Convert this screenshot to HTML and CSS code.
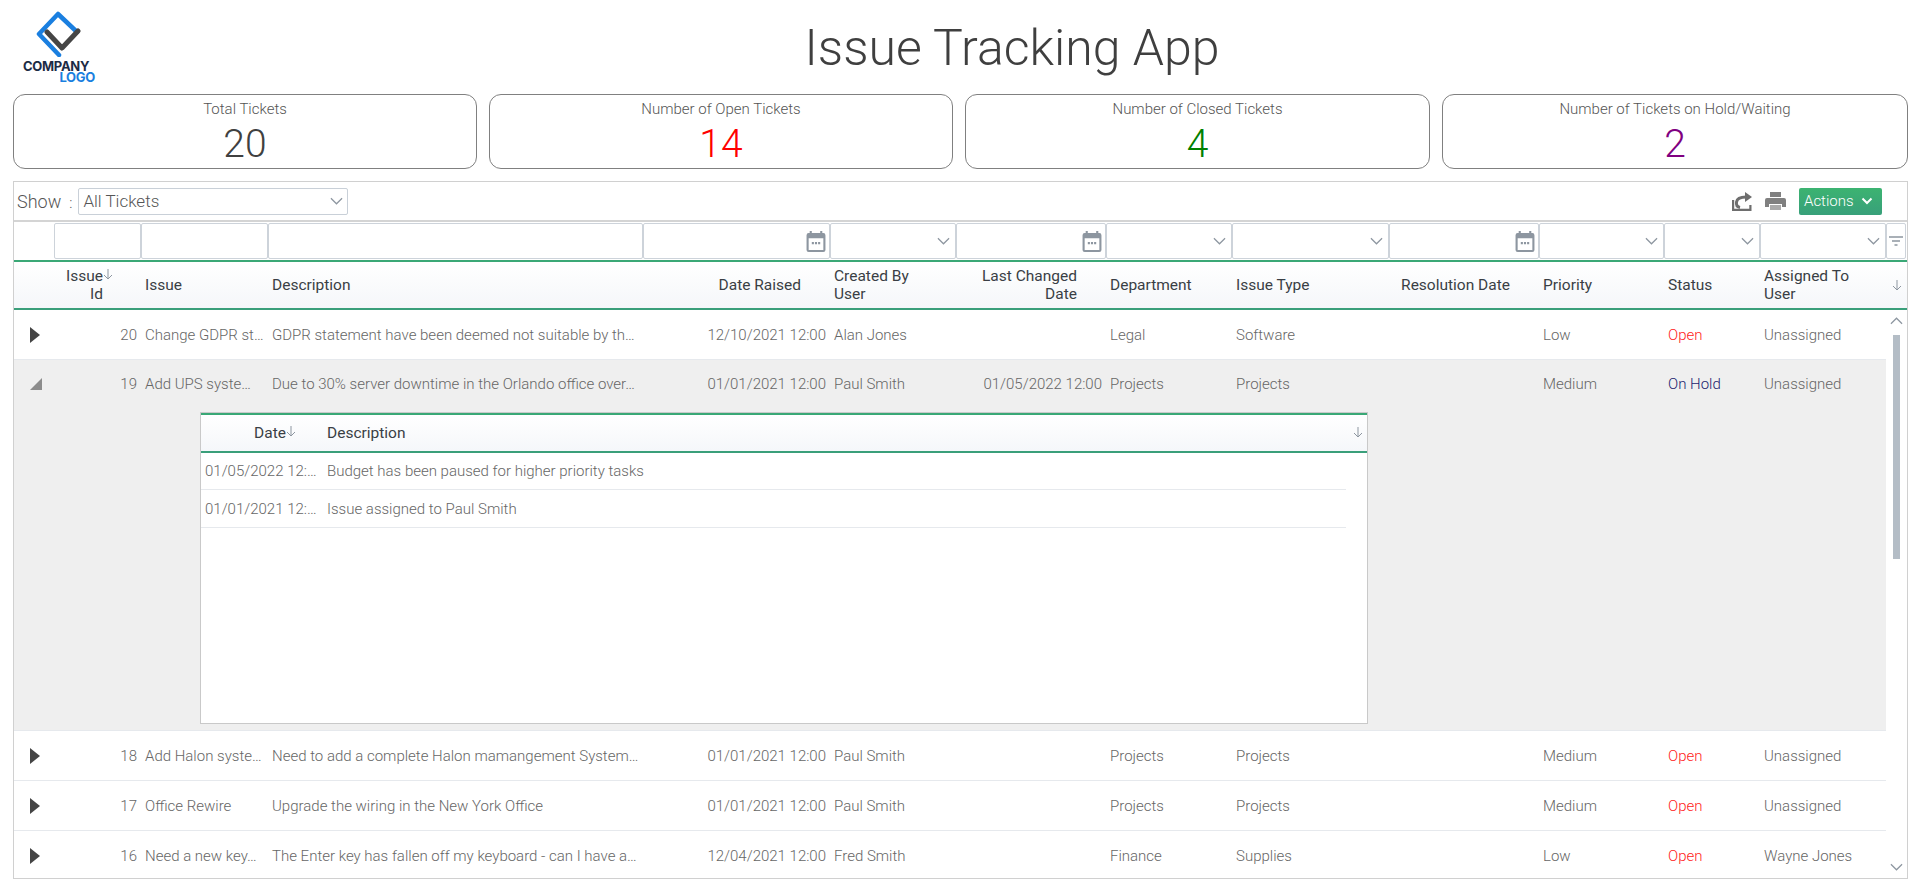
FILE: index.html
```html
<!DOCTYPE html>
<html lang="en">
<head>
    <meta charset="UTF-8">
    <title>Issue Tracking App</title>
    <link rel="stylesheet" href="styles.css">
</head>
<body>
    <svg class="defs" width="0" height="0">
        <symbol id="i-chevron" viewBox="0 0 14 8"><path d="M1 1l6 6 6-6" fill="none" stroke="currentColor" stroke-width="1.3"/></symbol>
        <symbol id="i-calendar" viewBox="0 0 18 20"><path fill="currentColor" d="M3 0h2v2h8V0h2v2h1a2 2 0 0 1 2 2v14a2 2 0 0 1-2 2H2a2 2 0 0 1-2-2V4a2 2 0 0 1 2-2h1zM2 7v11h14V7z"/><path fill="currentColor" d="M5 10.500h2v2H5zM8 10.500h2v2H8zM11 10.500h2v2h-2z"/></symbol>
        <symbol id="i-right" viewBox="0 0 10 16"><path fill="currentColor" d="M0 0l10 8-10 8z"/></symbol>
        <symbol id="i-open" viewBox="0 0 12 12"><path fill="currentColor" d="M12 0v12H0z"/></symbol>
        <symbol id="i-sort" viewBox="0 0 10 11"><path d="M5 0v10M1 6l4 4 4-4" fill="none" stroke="currentColor" stroke-width="1"/></symbol>
    </svg>

    <header class="top">
        <div class="logo">
            <svg class="logo-mark" viewBox="0 0 46 46" width="46" height="46">
                <path d="M24 44L4 23 23 3l19 18" fill="none" stroke="#1a7fe0" stroke-width="4.500" stroke-linejoin="round" stroke-linecap="round"/>
                <path d="M12 21l15 16 16-17" fill="none" stroke="#454545" stroke-width="5" stroke-linejoin="round" stroke-linecap="round"/>
            </svg>
            <div class="logo-a">COMPANY</div>
            <div class="logo-b">LOGO</div>
        </div>
        <h1>Issue Tracking App</h1>
    </header>

    <section class="cards">
        <div class="card"><div class="card-label">Total Tickets</div><div class="card-num">20</div></div>
        <div class="card"><div class="card-label">Number of Open Tickets</div><div class="card-num red">14</div></div>
        <div class="card"><div class="card-label">Number of Closed Tickets</div><div class="card-num green">4</div></div>
        <div class="card"><div class="card-label">Number of Tickets on Hold/Waiting</div><div class="card-num purple">2</div></div>
    </section>

    <section class="panel">
        <div class="toolbar">
            <span class="show">Show</span>
            <span class="colon">:</span>
            <div class="select">All Tickets <svg class="chev"><use href="#i-chevron"/></svg></div>
            <div class="tools">
                <svg class="tool" viewBox="0 0 20 20" width="20" height="20">
                    <path fill="none" stroke="#6e6e6e" stroke-width="2.200" d="M1.100 9v9.900h17.300V14"/>
                    <path fill="none" stroke="#6e6e6e" stroke-width="3" d="M8 16.500c-2.500-.5-4-2.500-3.500-5.500 .5-3 3.500-5 9.500-5"/>
                    <path fill="#6e6e6e" d="M13 1l7 5-7 5z"/>
                </svg>
                <svg class="tool" viewBox="0 0 21 20" width="21" height="20">
                    <path fill="#808080" d="M5 1h11v5H5zM2 7h17a2 2 0 0 1 2 2v7h-4v-3H4v3H0V9a2 2 0 0 1 2-2z"/>
                    <path fill="#aaa" d="M5 14h11v5H5z"/>
                </svg>
                <button class="actions">Actions
                    <svg viewBox="0 0 12 8" width="12" height="8"><path d="M1.500 1.500L6 6l4.500-4.500" fill="none" stroke="#fff" stroke-width="2"/></svg>
                </button>
            </div>
        </div>

        <div class="filters cols">
            <div></div>
            <div class="fbox"></div>
            <div class="fbox"></div>
            <div class="fbox"></div>
            <div class="fbox"><svg class="cal"><use href="#i-calendar"/></svg></div>
            <div class="fbox"><svg class="chev"><use href="#i-chevron"/></svg></div>
            <div class="fbox"><svg class="cal"><use href="#i-calendar"/></svg></div>
            <div class="fbox"><svg class="chev"><use href="#i-chevron"/></svg></div>
            <div class="fbox"><svg class="chev"><use href="#i-chevron"/></svg></div>
            <div class="fbox"><svg class="cal"><use href="#i-calendar"/></svg></div>
            <div class="fbox"><svg class="chev"><use href="#i-chevron"/></svg></div>
            <div class="fbox"><svg class="chev"><use href="#i-chevron"/></svg></div>
            <div class="fbox"><svg class="chev"><use href="#i-chevron"/></svg></div>
            <div class="fbox fbox-icon">
                <svg viewBox="0 0 14 10" width="14" height="10"><path d="M0 1h14M3 5h8M5.500 9h3" stroke="#8d96a0" stroke-width="1.500"/></svg>
            </div>
        </div>

        <div class="thead cols">
            <div></div>
            <div class="th th-id">Issue<br>Id<svg class="sort"><use href="#i-sort"/></svg></div>
            <div class="th">Issue</div>
            <div class="th">Description</div>
            <div class="th th-right">Date Raised</div>
            <div class="th">Created By<br>User</div>
            <div class="th th-right">Last Changed<br>Date</div>
            <div class="th">Department</div>
            <div class="th">Issue Type</div>
            <div class="th th-right">Resolution Date</div>
            <div class="th">Priority</div>
            <div class="th">Status</div>
            <div class="th">Assigned To<br>User</div>
            <div class="th th-end"><svg class="sort-end"><use href="#i-sort"/></svg></div>
        </div>

        <div class="tbody">
            <div class="rows">
                <div class="row cols">
                    <div class="exp"><svg class="tri"><use href="#i-right"/></svg></div>
                    <div class="td num">20</div>
                    <div class="td">Change GDPR st…</div>
                    <div class="td">GDPR statement have been deemed not suitable by th…</div>
                    <div class="td num">12/10/2021 12:00</div>
                    <div class="td">Alan Jones</div>
                    <div class="td num"></div>
                    <div class="td">Legal</div>
                    <div class="td">Software</div>
                    <div class="td"></div>
                    <div class="td">Low</div>
                    <div class="td open">Open</div>
                    <div class="td">Unassigned</div>
                </div>

                <div class="expanded">
                    <div class="row row-open cols">
                        <div class="exp"><svg class="tri-open"><use href="#i-open"/></svg></div>
                        <div class="td num">19</div>
                        <div class="td">Add UPS syste…</div>
                        <div class="td">Due to 30% server downtime in the Orlando office over…</div>
                        <div class="td num">01/01/2021 12:00</div>
                        <div class="td">Paul Smith</div>
                        <div class="td num">01/05/2022 12:00</div>
                        <div class="td">Projects</div>
                        <div class="td">Projects</div>
                        <div class="td"></div>
                        <div class="td">Medium</div>
                        <div class="td hold">On Hold</div>
                        <div class="td">Unassigned</div>
                    </div>
                    <div class="nested">
                        <div class="nested-head ncols">
                            <div class="nth nth-date">Date<svg class="sort"><use href="#i-sort"/></svg></div>
                            <div class="nth">Description</div>
                            <svg class="sort-nested"><use href="#i-sort"/></svg>
                        </div>
                        <div class="nrow ncols">
                            <div class="ntd">01/05/2022 12:…</div>
                            <div class="ntd">Budget has been paused for higher priority tasks</div>
                        </div>
                        <div class="nrow ncols">
                            <div class="ntd">01/01/2021 12:…</div>
                            <div class="ntd">Issue assigned to Paul Smith</div>
                        </div>
                    </div>
                </div>

                <div class="row cols">
                    <div class="exp"><svg class="tri"><use href="#i-right"/></svg></div>
                    <div class="td num">18</div>
                    <div class="td">Add Halon syste…</div>
                    <div class="td">Need to add a complete Halon mamangement System…</div>
                    <div class="td num">01/01/2021 12:00</div>
                    <div class="td">Paul Smith</div>
                    <div class="td num"></div>
                    <div class="td">Projects</div>
                    <div class="td">Projects</div>
                    <div class="td"></div>
                    <div class="td">Medium</div>
                    <div class="td open">Open</div>
                    <div class="td">Unassigned</div>
                </div>
                <div class="row cols">
                    <div class="exp"><svg class="tri"><use href="#i-right"/></svg></div>
                    <div class="td num">17</div>
                    <div class="td">Office Rewire</div>
                    <div class="td">Upgrade the wiring in the New York Office</div>
                    <div class="td num">01/01/2021 12:00</div>
                    <div class="td">Paul Smith</div>
                    <div class="td num"></div>
                    <div class="td">Projects</div>
                    <div class="td">Projects</div>
                    <div class="td"></div>
                    <div class="td">Medium</div>
                    <div class="td open">Open</div>
                    <div class="td">Unassigned</div>
                </div>
                <div class="row cols">
                    <div class="exp"><svg class="tri"><use href="#i-right"/></svg></div>
                    <div class="td num">16</div>
                    <div class="td">Need a new key…</div>
                    <div class="td">The Enter key has fallen off my keyboard - can I have a…</div>
                    <div class="td num">12/04/2021 12:00</div>
                    <div class="td">Fred Smith</div>
                    <div class="td num"></div>
                    <div class="td">Finance</div>
                    <div class="td">Supplies</div>
                    <div class="td"></div>
                    <div class="td">Low</div>
                    <div class="td open">Open</div>
                    <div class="td">Wayne Jones</div>
                </div>
            </div>
            <div class="scrollbar">
                <svg class="scroll-up"><use href="#i-chevron"/></svg>
                <div class="thumb"></div>
                <svg class="scroll-down"><use href="#i-chevron"/></svg>
            </div>
        </div>
    </section>
</body>
</html>
```

FILE: styles.css
```css
html, body {
    height: 100%;
}
body {
    font-family: Roboto, sans-serif;
    font-weight: 300;
    font-size: 15px;
    color: #555;
    margin: 0;
    padding: 0 11px 7px 13px;
    box-sizing: border-box;
    background: #fff;
    overflow: hidden;
}
.defs {
    position: absolute;
}

/* header */
.top {
    display: flex;
    align-items: center;
    height: 94px;
    margin-left: -13px;
}
.logo {
    width: 72px;
    margin-left: 23px;
    margin-right: 21px;
    display: flex;
    flex-direction: column;
    font-family: Inter, Roboto, sans-serif;
    font-weight: 700;
    font-size: 13px;
    line-height: 11px;
    letter-spacing: -0.3px;
}
.logo-mark {
    margin-left: 12px;
    margin-bottom: 4px;
}
.logo-a {
    color: #1c2b45;
}
.logo-b {
    color: #1a7fe0;
    text-align: right;
}
h1 {
    flex: 1;
    margin: 2px 0 0;
    text-align: center;
    font-weight: 300;
    font-size: 50px;
    line-height: 64px;
    color: #3f3f3f;
}

/* summary cards */
.cards {
    display: grid;
    grid-template-columns: 464px 464px 465px 1fr;
    gap: 12px;
    height: 75px;
    margin-bottom: 12px;
}
.card {
    border: 1px solid #808080;
    border-radius: 12px;
    text-align: center;
}
.card-label {
    margin-top: 4px;
    line-height: 20px;
    color: #555;
}
.card-num {
    font-size: 39px;
    line-height: 46px;
    margin-top: 2px;
    color: #404040;
}
.red { color: #ff0000; }
.green { color: #008000; }
.purple { color: #800080; }

/* panel */
.panel {
    border: 1px solid #d0d0d0;
    height: 698px;
    box-sizing: border-box;
    display: flex;
    flex-direction: column;
}
.toolbar {
    display: flex;
    align-items: center;
    height: 40px;
    flex: none;
    box-sizing: border-box;
    border-bottom: 2px solid #d4d4d4;
    padding-left: 3px;
}
.show {
    font-size: 18px;
    color: #555;
}
.colon {
    margin-left: 8px;
    margin-right: 6px;
    margin-top: 3px;
}
.select {
    width: 270px;
    height: 27px;
    box-sizing: border-box;
    border: 1px solid #c9d0d8;
    border-radius: 2px;
    font-size: 17px;
    line-height: 25px;
    padding-left: 4px;
    display: flex;
    justify-content: space-between;
    align-items: center;
    padding-right: 4px;
}
.chev {
    width: 13px;
    height: 8px;
    color: #8d96a0;
}
.tools {
    margin-left: auto;
    margin-right: 25px;
    display: flex;
    align-items: center;
    gap: 13px;
}
.actions {
    width: 83px;
    height: 27px;
    border: none;
    border-radius: 2px;
    background: linear-gradient(#3cb371, #38a07a);
    color: #fff;
    font-family: Roboto, sans-serif;
    font-weight: 300;
    font-size: 15px;
    display: flex;
    align-items: center;
    justify-content: space-between;
    padding: 0 9px 0 5px;
}

/* shared columns */
.cols {
    display: grid;
    grid-template-columns: 40px 87px 127px 375px 187px 126px 150px 126px 157px 150px 125px 96px 126px;
}
.filters {
    grid-template-columns: 40px 87px 127px 375px 187px 126px 150px 126px 157px 150px 125px 96px 126px 20px;
    height: 38px;
    flex: none;
    box-sizing: border-box;
    padding: 1px 0;
}
.fbox {
    border: 1px solid #cdd3da;
    border-radius: 2px;
    display: flex;
    align-items: center;
    justify-content: flex-end;
    padding-right: 5px;
}
.fbox-icon {
    padding-right: 0;
    justify-content: center;
}
.cal {
    width: 20px;
    height: 21px;
    color: #8d96a0;
    margin-right: -2px;
}
.thead {
    grid-template-columns: 40px 87px 127px 375px 187px 126px 150px 126px 157px 150px 125px 96px 126px 21px;
    flex: none;
    height: 50px;
    box-sizing: border-box;
    border-top: 2px solid #3aa876;
    border-bottom: 2px solid #3a9f7a;
    background: linear-gradient(#fff, #f5f7fa);
}
.th {
    padding: 0 4px;
    color: #3a3f45;
    font-weight: 400;
    font-size: 15.500px;
    line-height: 18px;
    position: relative;
    align-self: center;
}
.th-right {
    text-align: right;
    padding-right: 29px;
}
.th-id {
    text-align: right;
    padding-right: 38px;
}
.sort {
    position: absolute;
    width: 10px;
    height: 11px;
    color: #8d96a0;
    top: 2px;
    right: 28px;
}
.th-end {
    padding: 0;
}
.sort-end {
    display: block;
    width: 10px;
    height: 11px;
    color: #8d96a0;
    margin-left: 6px;
}

/* body rows */
.tbody {
    flex: 1;
    display: flex;
    min-height: 0;
    overflow: hidden;
}
.rows {
    width: 1872px;
    flex: none;
}
.row {
    height: 50px;
    box-sizing: border-box;
    border-bottom: 1px solid #e6e9ed;
    align-items: center;
}
.td {
    padding: 0 4px;
    white-space: nowrap;
    line-height: 18px;
    color: #666;
}
.num {
    text-align: right;
    padding: 0 4px 0 0;
}
.open { color: #ff1a1a; }
.hold { color: #1c1c6e; }
.exp {
    padding-left: 16px;
    display: flex;
    align-items: center;
}
.tri {
    width: 10px;
    height: 16px;
    color: #444;
}
.tri-open {
    width: 12px;
    height: 12px;
    color: #8c8c8c;
}
.expanded {
    background: #efefef;
    height: 371px;
    box-sizing: border-box;
    border-bottom: 1px solid #e6e9ed;
}
.row-open {
    height: 47px;
    border-bottom: none;
}
.nested {
    margin: 5px 0 0 186px;
    width: 1168px;
    height: 312px;
    box-sizing: border-box;
    background: #fff;
    border: 1px solid #c9c9c9;
}
.ncols {
    display: grid;
    grid-template-columns: 122px 1fr;
    align-items: center;
}
.nested-head {
    height: 40px;
    box-sizing: border-box;
    border-top: 2px solid #3aa876;
    border-bottom: 2px solid #3a9f7a;
    background: linear-gradient(#fff, #f5f7fa);
    position: relative;
}
.nth {
    color: #3a3f45;
    font-weight: 400;
    font-size: 15.500px;
    padding-left: 4px;
    position: relative;
}
.nth-date {
    text-align: right;
    padding-right: 37px;
}
.nth-date .sort {
    right: 27px;
}
.sort-nested {
    position: absolute;
    right: 4px;
    top: 12px;
    width: 10px;
    height: 11px;
    color: #8d96a0;
}
.nrow {
    height: 37px;
    box-sizing: border-box;
    border-bottom: 1px solid #e6e9ed;
    margin-right: 21px;
}
.nrow + .nrow {
    height: 38px;
}
.ntd {
    padding: 0 6px 0 4px;
    white-space: nowrap;
    color: #666;
}

/* scrollbar */
.scrollbar {
    flex: 1;
    position: relative;
}
.scroll-up, .scroll-down {
    position: absolute;
    left: 4px;
    width: 13px;
    height: 8px;
    color: #8d96a0;
}
.scroll-up {
    top: 7px;
    transform: rotate(180deg);
}
.scroll-down {
    bottom: 7px;
}
.thumb {
    position: absolute;
    top: 25px;
    left: 7px;
    width: 7px;
    height: 224px;
    background: #b4bdc6;
}
```
